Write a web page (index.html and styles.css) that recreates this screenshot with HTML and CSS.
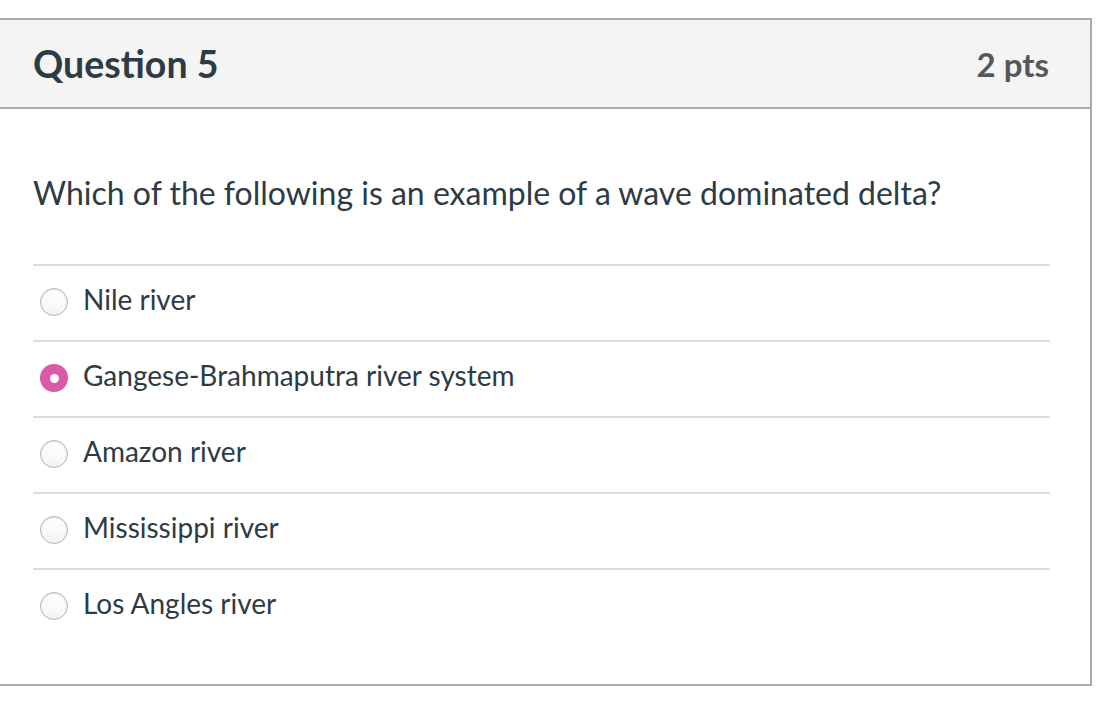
FILE: index.html
```html
<!DOCTYPE html>
<html>
<head>
<meta charset="utf-8">
<link rel="stylesheet" href="styles.css">
</head>
<body>
<div class="question">
  <div class="q-header">
    <span class="q-title">Question 5</span>
    <span class="q-points">2 pts</span>
  </div>
  <div class="q-body">
    <p class="q-text">Which of the following is an example of a wave dominated delta?</p>
    <ul class="answers">
      <li class="answer"><span class="radio"></span><span class="label">Nile river</span></li>
      <li class="answer"><span class="radio checked"></span><span class="label">Gangese-Brahmaputra river system</span></li>
      <li class="answer"><span class="radio"></span><span class="label">Amazon river</span></li>
      <li class="answer"><span class="radio"></span><span class="label">Mississippi river</span></li>
      <li class="answer"><span class="radio"></span><span class="label">Los Angles river</span></li>
    </ul>
  </div>
</div>
</body>
</html>
```
FILE: styles.css
```css
html, body {
  margin: 0;
  padding: 0;
  background: #fff;
}
body {
  font-family: Lato, "Open Sans", sans-serif;
  color: #2d3b45;
}
.question {
  margin: 18px 16px 0 -2px;
  border: 2px solid #aaaaaa;
}
.q-header {
  display: flex;
  justify-content: space-between;
  align-items: center;
  height: 87px;
  padding: 0 41px 0 33px;
  background: #f4f4f4;
  border-bottom: 2px solid #aaaaaa;
}
.q-title {
  font-weight: 700;
  font-size: 37.5px;
  color: #2d3b45;
}
.q-points {
  font-weight: 700;
  font-size: 33px;
  color: #575757;
}
.q-body {
  padding: 60px 40px 40px 33px;
}
.q-text {
  margin: 0 0 47px;
  font-size: 32px;
  line-height: 48px;
}
.answers {
  list-style: none;
  margin: 0;
  padding: 0;
}
.answer {
  display: flex;
  align-items: center;
  gap: 15px;
  height: 74px;
  border-top: 2px solid #dddddd;
  font-size: 28px;
}
.label {
  margin-top: -8px;
}
.radio {
  box-sizing: border-box;
  width: 28px;
  height: 28px;
  margin: 0 0 2px 7px;
  border-radius: 50%;
  border: 1px solid #b5b5b5;
  background: linear-gradient(#ffffff, #f4f4f4);
  box-shadow: inset 0 1px 2px rgba(0,0,0,0.12);
  display: flex;
  align-items: center;
  justify-content: center;
}
.radio.checked {
  border: none;
  background: #d95ba7;
  box-shadow: none;
}
.radio.checked::after {
  content: "";
  width: 9px;
  height: 9px;
  border-radius: 50%;
  background: #fff;
}
```
